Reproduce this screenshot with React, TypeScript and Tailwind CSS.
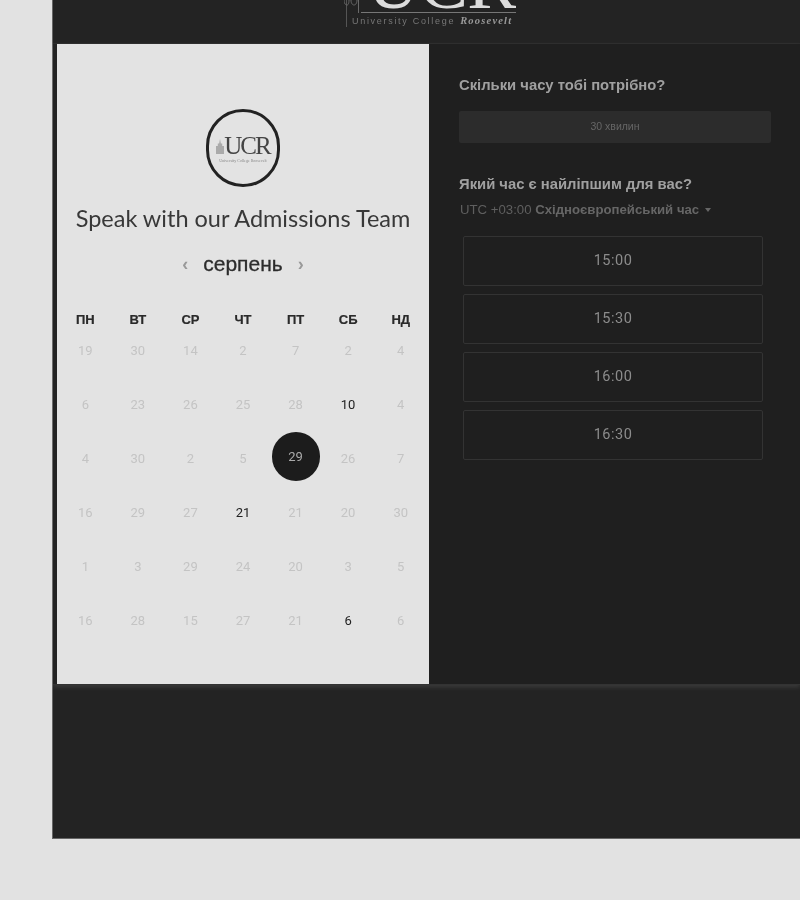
const weeks = [
  ['19', '30', '14', '2', '7', '2', '4'],
  ['6', '23', '26', '25', '28', '10', '4'],
  ['4', '30', '2', '5', '29', '26', '7'],
  ['16', '29', '27', '21', '21', '20', '30'],
  ['1', '3', '29', '24', '20', '3', '5'],
  ['16', '28', '15', '27', '21', '6', '6'],
];

const dayNames = ['ПН', 'ВТ', 'СР', 'ЧТ', 'ПТ', 'СБ', 'НД'];
const slots = ['15:00', '15:30', '16:00', '16:30'];

// row, column of the dates that can be booked
const available = ['1-5', '3-3', '5-5'];

const Header = () => (
  <div className="h-[44px] shrink-0 overflow-hidden flex justify-center border-b border-[#2a2a2a]">
    <div className="w-[170px] h-[27px] ml-[9px] shrink-0 flex flex-col border-l border-[#555]">
      <div className="h-[13px] shrink-0 flex">
        <svg width="17" height="13" viewBox="0 0 17 13" className="shrink-0 -ml-[3px]" fill="none" stroke="#6a6a6a">
          <path d="M0 0c0 4 2 5 3 5s2-1 2-5M7 0c0 4 2 5 3 5s3-1 3-5M14.5 0v13" />
        </svg>
        <div className="flex-1 min-w-0 flex justify-center items-end overflow-hidden border-b border-[#777]">
          <div className="font-['Liberation_Serif',serif] text-[74px] leading-[60px] mb-[-1px] ml-[5px] text-[#dcdcdc] tracking-[-1px]">
            UCR
          </div>
        </div>
      </div>
      <div className="flex-1 flex items-center gap-[5px] pl-[5px] pt-[1px] whitespace-nowrap">
        <span className="font-['Liberation_Sans',sans-serif] text-[9px] leading-[12px] tracking-[1.7px] text-[#777]">
          University College
        </span>
        <span className="font-['Liberation_Serif',serif] italic font-bold text-[10.5px] leading-[12px] tracking-[1.2px] text-[#999]">
          Roosevelt
        </span>
      </div>
    </div>
  </div>
);

const Logo = () => (
  <div className="w-[74px] h-[78px] rounded-full border-[3px] border-[#222] flex flex-col items-center justify-center">
    <div className="flex items-end mt-[1px]">
      <svg width="8" height="17" viewBox="0 0 9 17" className="mb-[3px]">
        <path d="M0 17V8h2V5h1.5L4.5 0l1 5H7v3h2v9z" fill="#aaa" />
      </svg>
      <span className="font-['Liberation_Serif',serif] text-[25px] leading-[24px] tracking-[-2px] text-[#444]">UCR</span>
    </div>
    <span className="font-['Liberation_Serif',serif] text-[4px] leading-[5px] text-[#888] whitespace-nowrap">
      University College Roosevelt
    </span>
  </div>
);

const Calendar = () => (
  <div className="w-[372px] shrink-0 bg-[#e3e3e3] flex flex-col items-center pt-[65px] px-[2px]">
    <Logo />
    <div className="mt-[14px] h-[34px] font-['Lato',sans-serif] text-[23.5px] leading-[34px] text-[#383838] whitespace-nowrap">
      Speak with our Admissions Team
    </div>
    <div className="mt-[15px] h-[28px] flex items-center font-['Liberation_Sans',sans-serif]">
      <span className="text-[18px] font-bold text-[#999] w-[18px] text-center">‹</span>
      <span className="text-[21px] text-[#2c2c2c] mx-[9px] [-webkit-text-stroke:0.3px_#2c2c2c]">серпень</span>
      <span className="text-[18px] font-bold text-[#999] w-[18px] text-center">›</span>
    </div>
    <div className="w-full mt-[34px] grid grid-cols-7 font-['Liberation_Sans',sans-serif] text-[13px] font-bold text-[#2a2a2a] text-center leading-[16px] [-webkit-text-stroke:0.2px_#2a2a2a]">
      {dayNames.map((d) => (
        <div key={d}>{d}</div>
      ))}
    </div>
    <div className="w-full grid grid-cols-7 auto-rows-[54px] font-['Roboto',sans-serif] text-[13px] text-center">
      {weeks.map((week, r) =>
        week.map((day, c) => {
          const selected = r === 2 && c === 4;
          return (
            <div key={`${r}-${c}`} className="flex items-start justify-center pt-[13px] leading-[20px]">
              {selected ? (
                <div className="w-[48px] h-[49px] mt-[-17px] rounded-full bg-[#1c1c1c] text-[#aaa] flex items-center justify-center">
                  {day}
                </div>
              ) : (
                <span className={available.includes(`${r}-${c}`) ? 'text-[#222]' : 'text-[#c4c4c4]'}>{day}</span>
              )}
            </div>
          );
        }),
      )}
    </div>
  </div>
);

const TimePicker = () => (
  <div className="flex-1 min-w-0 bg-[#1f1f1f] pl-[30px] pr-[29px] pt-[32px] font-['Liberation_Sans',sans-serif]">
    <div className="text-[14.8px] font-bold leading-[18px] text-[#a0a0a0]">Скільки часу тобі потрібно?</div>
    <div className="mt-[17px] h-[32px] rounded-[2px] bg-[#2c2c2c] flex items-center justify-center text-[10.5px] text-[#666]">
      30 хвилин
    </div>
    <div className="mt-[32px] text-[14.8px] font-bold leading-[18px] text-[#a0a0a0]">Який час є найліпшим для вас?</div>
    <div className="mt-[8px] flex items-center pl-[1px] text-[13.2px] leading-[18px] text-[#5f5f5f] whitespace-nowrap">
      UTC +03:00&nbsp;<span className="font-bold text-[#666]">Східноєвропейський час</span>
      <span className="ml-[6px] w-0 h-0 border-x-[3.5px] border-x-transparent border-t-[4px] border-t-[#666]" />
    </div>
    <div className="mt-[17px] ml-[4px] w-[300px] flex flex-col gap-[8px]">
      {slots.map((s) => (
        <div
          key={s}
          className="h-[50px] pb-[1px] rounded-[2px] border border-[#333] flex items-center justify-center font-['Roboto',sans-serif] text-[14.5px] tracking-[0.5px] text-[#8c8c8c]"
        >
          {s}
        </div>
      ))}
    </div>
  </div>
);

export default function App() {
  return (
    <div className="w-[800px] h-[900px] overflow-hidden bg-[#e2e2e2] pl-[52px]">
      <div className="w-[748px] h-[839px] flex flex-col bg-[#232323] border-l border-b border-[#666] blur-[0.4px]">
        <Header />
        <div className="h-[641px] shrink-0 flex pl-[4px] border-b border-[#333] shadow-[0_2px_5px_rgba(255,255,255,0.12)]">
          <Calendar />
          <TimePicker />
        </div>
      </div>
    </div>
  );
}
